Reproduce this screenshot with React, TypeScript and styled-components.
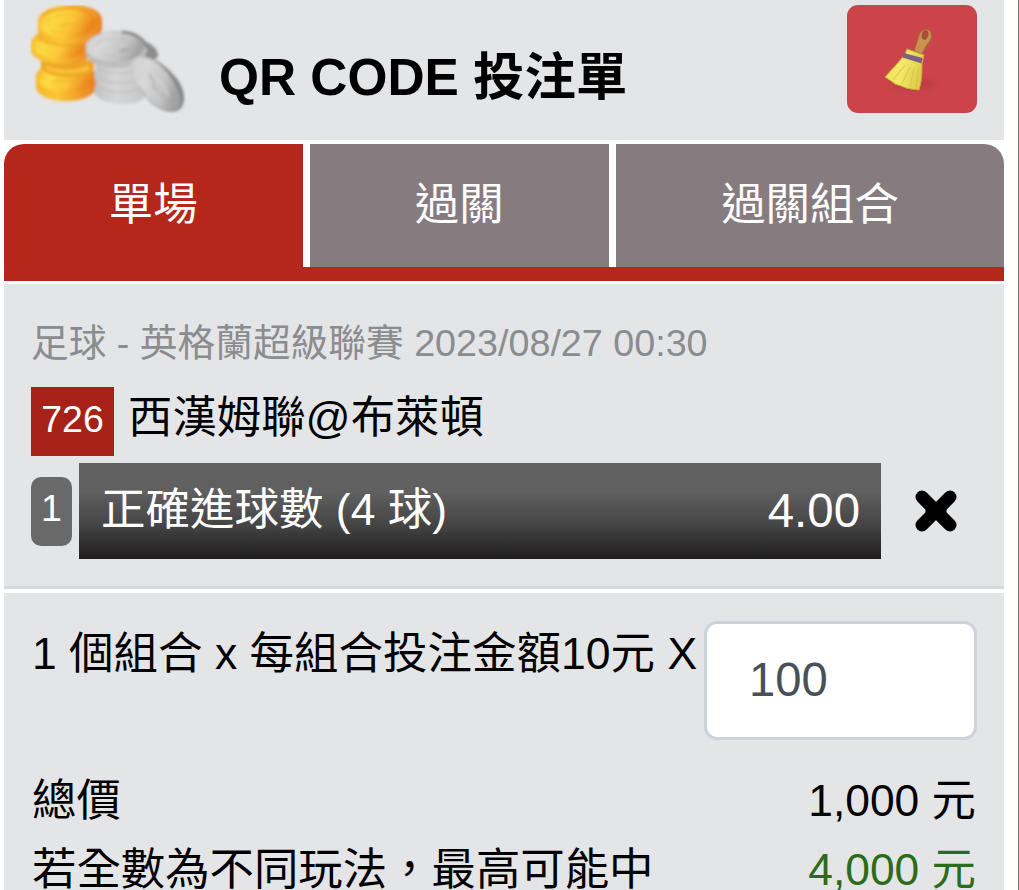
import React, { useState } from "react";
import styled, { createGlobalStyle } from "styled-components";

const GlobalStyle = createGlobalStyle`
  * {
    box-sizing: border-box;
  }
  html, body {
    margin: 0;
    background: #fff;
    overflow: hidden;
  }
  body, button, input {
    font-family: "Liberation Sans", "Noto Sans CJK TC", sans-serif;
  }
`

const Page = styled.div`
  height: 890px;
  padding: 0 14px 0 4px;
  border-right: 1px solid #747b66;
  overflow: hidden;
  color: #000;
`

const Header = styled.header`
  display: flex;
  align-items: flex-start;
  height: 140px;
  padding: 5px 27px 0 26px;
  background: #e4e5e7;
`

const Title = styled.h1`
  flex: 1;
  margin: 36px 0 0 33px;
  font-size: 51.4px;
  line-height: 72px;
  font-weight: 700;
  white-space: nowrap;
`

const ClearButton = styled.button`
  width: 130px;
  height: 108px;
  padding: 0;
  border: 0;
  border-radius: 11px;
  background: #cb444a;
`

const Tabs = styled.nav`
  display: grid;
  grid-template-columns: 298.5px 299.5px 1fr;
  column-gap: 7px;
  height: 137px;
  margin-top: 4px;
  border-bottom: 14px solid #b5261b;
`

const Tab = styled.button<{ $active?: boolean }>`
  padding: 0 0 2px;
  border: 0;
  background: ${(props) => (props.$active ? "#b5261b" : "#867c80")};
  color: #fff;
  font-size: 44.4px;
  line-height: 60px;

  &:first-child {
    border-top-left-radius: 20px;
  }
  &:last-child {
    border-top-right-radius: 20px;
  }
`

const Match = styled.section`
  height: 305px;
  margin-top: 3px;
  padding: 34px 28px 0 27px;
  background: #e4e5e7;
  border-bottom: 3px solid #d7d8d9;
`

const League = styled.div`
  color: #8b8c8d;
  font-size: 37.7px;
  line-height: 50px;
  white-space: nowrap;
`

const Teams = styled.div`
  display: flex;
  margin-top: 19px;
  font-size: 44.4px;
  line-height: 62px;
`

const Code = styled.span`
  width: 83px;
  height: 69px;
  margin-right: 14px;
  background: #a62118;
  color: #fff;
  font-size: 37.5px;
  line-height: 64px;
  text-align: center;
`

const Pick = styled.div`
  display: flex;
  align-items: center;
  height: 96px;
  margin-top: 7px;
`

const Count = styled.span`
  width: 41px;
  height: 69px;
  margin-right: 7px;
  border-radius: 10px;
  background: #696969;
  color: #fff;
  font-size: 37.5px;
  line-height: 63px;
  text-align: center;
`

const Bet = styled.div`
  display: flex;
  justify-content: space-between;
  width: 802px;
  height: 96px;
  padding: 0 21px 0 22px;
  background: linear-gradient(#606060 0%, #606060 30%, #434343 66%, #1f1d1e 100%);
  color: #fff;
  font-size: 44.5px;
  line-height: 93px;
`

const Odds = styled.span`
  font-size: 47.4px;
  line-height: 95px;
`

const RemoveButton = styled.button`
  display: flex;
  margin-left: 33px;
  padding: 0;
  border: 0;
  background: none;
`

const Summary = styled.section`
  height: 300px;
  margin-top: 4px;
  padding: 28px 28px 0;
  background: #e4e5e7;
  font-size: 44.4px;
`

const Stake = styled.div`
  display: flex;
  justify-content: space-between;
  height: 145px;
  font-size: 44.5px;
  line-height: 66px;
  white-space: nowrap;
`

const Amount = styled.input`
  width: 273px;
  height: 119px;
  margin-right: -1px;
  padding: 0 0 2px 42px;
  border: 3px solid #cfd2db;
  border-radius: 13px;
  background: #fff;
  color: #495057;
  font-size: 47.2px;
  outline: none;
`

const Line = styled.div`
  display: flex;
  justify-content: space-between;
  height: 69px;
  line-height: 70px;
  white-space: nowrap;
`

const Money = styled.span<{ $win?: boolean }>`
  color: ${(props) => (props.$win ? "#2c6b1a" : "#000")};
`

const tabs = ["單場", "過關", "過關組合"]

function Coins() {
  return (
    <svg width="156" height="110" viewBox="30 5 156 110">
      <defs>
        <linearGradient id="gold" x1="0" y1="0" x2="1" y2="0.25">
          <stop offset="0" stopColor="#f6bb2c" />
          <stop offset="0.3" stopColor="#fddb42" />
          <stop offset="0.65" stopColor="#fbc636" />
          <stop offset="1" stopColor="#ea861e" />
        </linearGradient>
        <linearGradient id="goldEdge" x1="0" y1="0" x2="1" y2="0">
          <stop offset="0" stopColor="#f6b62b" />
          <stop offset="0.35" stopColor="#fbc634" />
          <stop offset="1" stopColor="#e98020" />
        </linearGradient>
        <linearGradient id="silver" x1="0" y1="0" x2="1" y2="0.3">
          <stop offset="0" stopColor="#cfcfcf" />
          <stop offset="0.35" stopColor="#d8d8d8" />
          <stop offset="0.75" stopColor="#c3c3c3" />
          <stop offset="1" stopColor="#a2a2a2" />
        </linearGradient>
        <linearGradient id="silverEdge" x1="0" y1="0" x2="1" y2="0">
          <stop offset="0" stopColor="#c2c2c2" />
          <stop offset="0.4" stopColor="#d6d6d6" />
          <stop offset="1" stopColor="#c4c4c4" />
        </linearGradient>
        <filter id="soft" x="-5%" y="-5%" width="110%" height="110%">
          <feGaussianBlur stdDeviation="1.4" />
        </filter>
      </defs>
      <g filter="url(#soft)">
        <path d="M36 77c0-9 13-14 30-14s30 5 30 14v9c0 9-13 15-30 15s-30-6-30-15z" fill="url(#goldEdge)" />
        <ellipse cx="66" cy="79" rx="28" ry="13" fill="url(#gold)" />
        <path d="M41 60h53v9c-3 6-13 8-26 8s-22-3-27-9z" fill="#eda428" />
        <path d="M46 67c10 6 32 7 43 0" stroke="#fac335" strokeWidth="4" fill="none" />
        <path d="M31 44c0-9 14-16 31-16s32 7 32 16v5c0 9-14 15-31 15S31 58 31 50z" fill="url(#goldEdge)" />
        <ellipse cx="59" cy="46" rx="27" ry="13" fill="url(#gold)" />
        <path d="M37 39c9 8 37 10 56 3l4-10-58-2z" fill="#ef9f28" opacity="0.6" />
        <path d="M38 22C38 12 52 5 71 5s31 6 31 16v9c-3 9-16 14-33 14s-31-6-31-14z" fill="url(#goldEdge)" />
        <ellipse cx="67" cy="24" rx="28" ry="14" fill="url(#gold)" />
        <path d="M47 23c4-9 29-12 37-3M50 30c9 5 27 4 33-2" stroke="#f5b52d" strokeWidth="2" fill="none" opacity="0.45" />
        <path d="M60 26c5-4 9 1 15-3M52 82c7-4 16 2 27-3" stroke="#efa627" strokeWidth="2" fill="none" opacity="0.6" />
        <path d="M42 16c8-8 41-12 55 1" stroke="#f2a128" strokeWidth="2" fill="none" />
        <path d="M94 45c16 11 42-4 55 4l-2 45c-4 7-12 10-25 10s-26-5-28-12l2-9-2-8 2-8z" fill="url(#silverEdge)" />
        <path d="M97 77c11 7 32 8 44 1M98 87c11 7 32 7 46 0M98 68c12 7 31 7 42 0" stroke="#b8b8b8" strokeWidth="2" fill="none" opacity="0.5" />
        <path d="M136 39c13 2 23 9 22 18l-7 4-16-10z" fill="#8d8d8d" />
        <path d="M86 47c0-9 14-16 31-16 18 0 30 8 30 17 0 12-14 20-32 20-16 0-28-7-29-15z" fill="#bebebe" />
        <ellipse cx="115" cy="47" rx="29" ry="15" fill="url(#silver)" />
        <path d="M122 32c14 1 23 8 25 16" stroke="#858585" strokeWidth="3" fill="none" />
        <path d="M95 47c3-9 28-12 37-3M99 53c9 5 24 4 31-1" stroke="#bdbdbd" strokeWidth="2" fill="none" opacity="0.4" />
        <path d="M120 52c3-4 5 0 9-3" stroke="#a5a5a5" strokeWidth="2.5" fill="none" />
        <path d="M139 57c12-3 28 9 38 22 9 12 10 27 0 32-15 4-29-9-36-22-8-14-11-28-2-32z" fill="#858585" />
        <path d="M137 57c12-3 26 8 35 22 9 14 12 28 3 31-11 4-25-7-33-20-10-14-14-29-5-33z" fill="url(#silver)" />
        <path d="M144 70c10 3 20 12 24 27" stroke="#d4d4d4" strokeWidth="3" fill="none" opacity="0.6" />
        <path d="M149 74l5 8-1 5 5 4M162 94l5 3" stroke="#b0b0b0" strokeWidth="2.5" fill="none" opacity="0.7" />
      </g>
    </svg>
  )
}

function Broom() {
  return (
    <svg width="130" height="108" viewBox="847 5 130 108">
      <defs>
        <linearGradient id="bristle" x1="0" y1="0" x2="1" y2="0.3">
          <stop offset="0" stopColor="#eee25a" />
          <stop offset="0.55" stopColor="#f2e967" />
          <stop offset="1" stopColor="#dfcd49" />
        </linearGradient>
        <filter id="softBroom" x="-20%" y="-20%" width="140%" height="140%">
          <feGaussianBlur stdDeviation="0.7" />
        </filter>
        <filter id="shade" x="-30%" y="-80%" width="160%" height="260%">
          <feGaussianBlur stdDeviation="3" />
        </filter>
      </defs>
      <ellipse cx="914" cy="84" rx="22" ry="5" fill="#9c2b34" opacity="0.35" filter="url(#shade)" />
      <g filter="url(#softBroom)">
        <path d="M914 51l5-16c2-6 10-7 12-3 2 5-1 10-4 13l-5 9z" fill="#cb9250" stroke="#a5683a" strokeWidth="1.2" />
        <ellipse cx="925" cy="35" rx="2.6" ry="4.2" transform="rotate(18 925 35)" fill="#b8463e" stroke="#8d5630" strokeWidth="1.2" />
        <path d="M907 49l17 6-2 9c0 8 0 17-3 26l-8-1-5-1-5-2-6-2-4-3-6-4c8-9 15-16 20-23z" fill="url(#bristle)" stroke="#c9a53d" strokeWidth="1" />
        <path d="M904 53l18.500 5-1 5.500-19-6z" fill="#7f6084" />
        <path d="M905 65l-12 15M910 67l-8 17M914 68l-4 19M918 69l-2 18" stroke="#cfbf46" strokeWidth="1.3" opacity="0.55" />
      </g>
    </svg>
  )
}

function Cross() {
  return (
    <svg width="44" height="44" viewBox="0 0 44 44">
      <defs>
        <filter id="softCross" x="-40%" y="-40%" width="180%" height="180%">
          <feGaussianBlur stdDeviation="0.7" />
        </filter>
      </defs>
      <g filter="url(#softCross)">
        <path d="M8 8l28 28M36 8L8 36" stroke="#000" strokeWidth="13" strokeLinecap="round" />
        <rect x="11.500" y="13" width="21" height="18" rx="3" />
      </g>
    </svg>
  )
}

export default function App() {

  const [active, setActive] = useState(0)
  const [amount, setAmount] = useState("100")

  return (
    <>
      <GlobalStyle />
      <Page>
        <Header>
          <Coins />
          <Title>QR CODE 投注單</Title>
          <ClearButton aria-label="清除"><Broom /></ClearButton>
        </Header>

        <Tabs>
          {tabs.map((tab, i) => (
            <Tab key={tab} $active={i === active} onClick={() => setActive(i)}>{tab}</Tab>
          ))}
        </Tabs>

        <Match>
          <League>足球 - 英格蘭超級聯賽 2023/08/27 00:30</League>
          <Teams><Code>726</Code>西漢姆聯@布萊頓</Teams>
          <Pick>
            <Count>1</Count>
            <Bet>
              <span>正確進球數 (4 球)</span>
              <Odds>4.00</Odds>
            </Bet>
            <RemoveButton aria-label="移除"><Cross /></RemoveButton>
          </Pick>
        </Match>

        <Summary>
          <Stake>
            <span>1 個組合 x 每組合投注金額10元 X</span>
            <Amount value={amount} onChange={(e) => setAmount(e.target.value)} />
          </Stake>
          <Line>
            <span>總價</span>
            <Money>1,000 元</Money>
          </Line>
          <Line>
            <span>若全數為不同玩法，最高可能中</span>
            <Money $win>4,000 元</Money>
          </Line>
        </Summary>
      </Page>
    </>
  );
}
